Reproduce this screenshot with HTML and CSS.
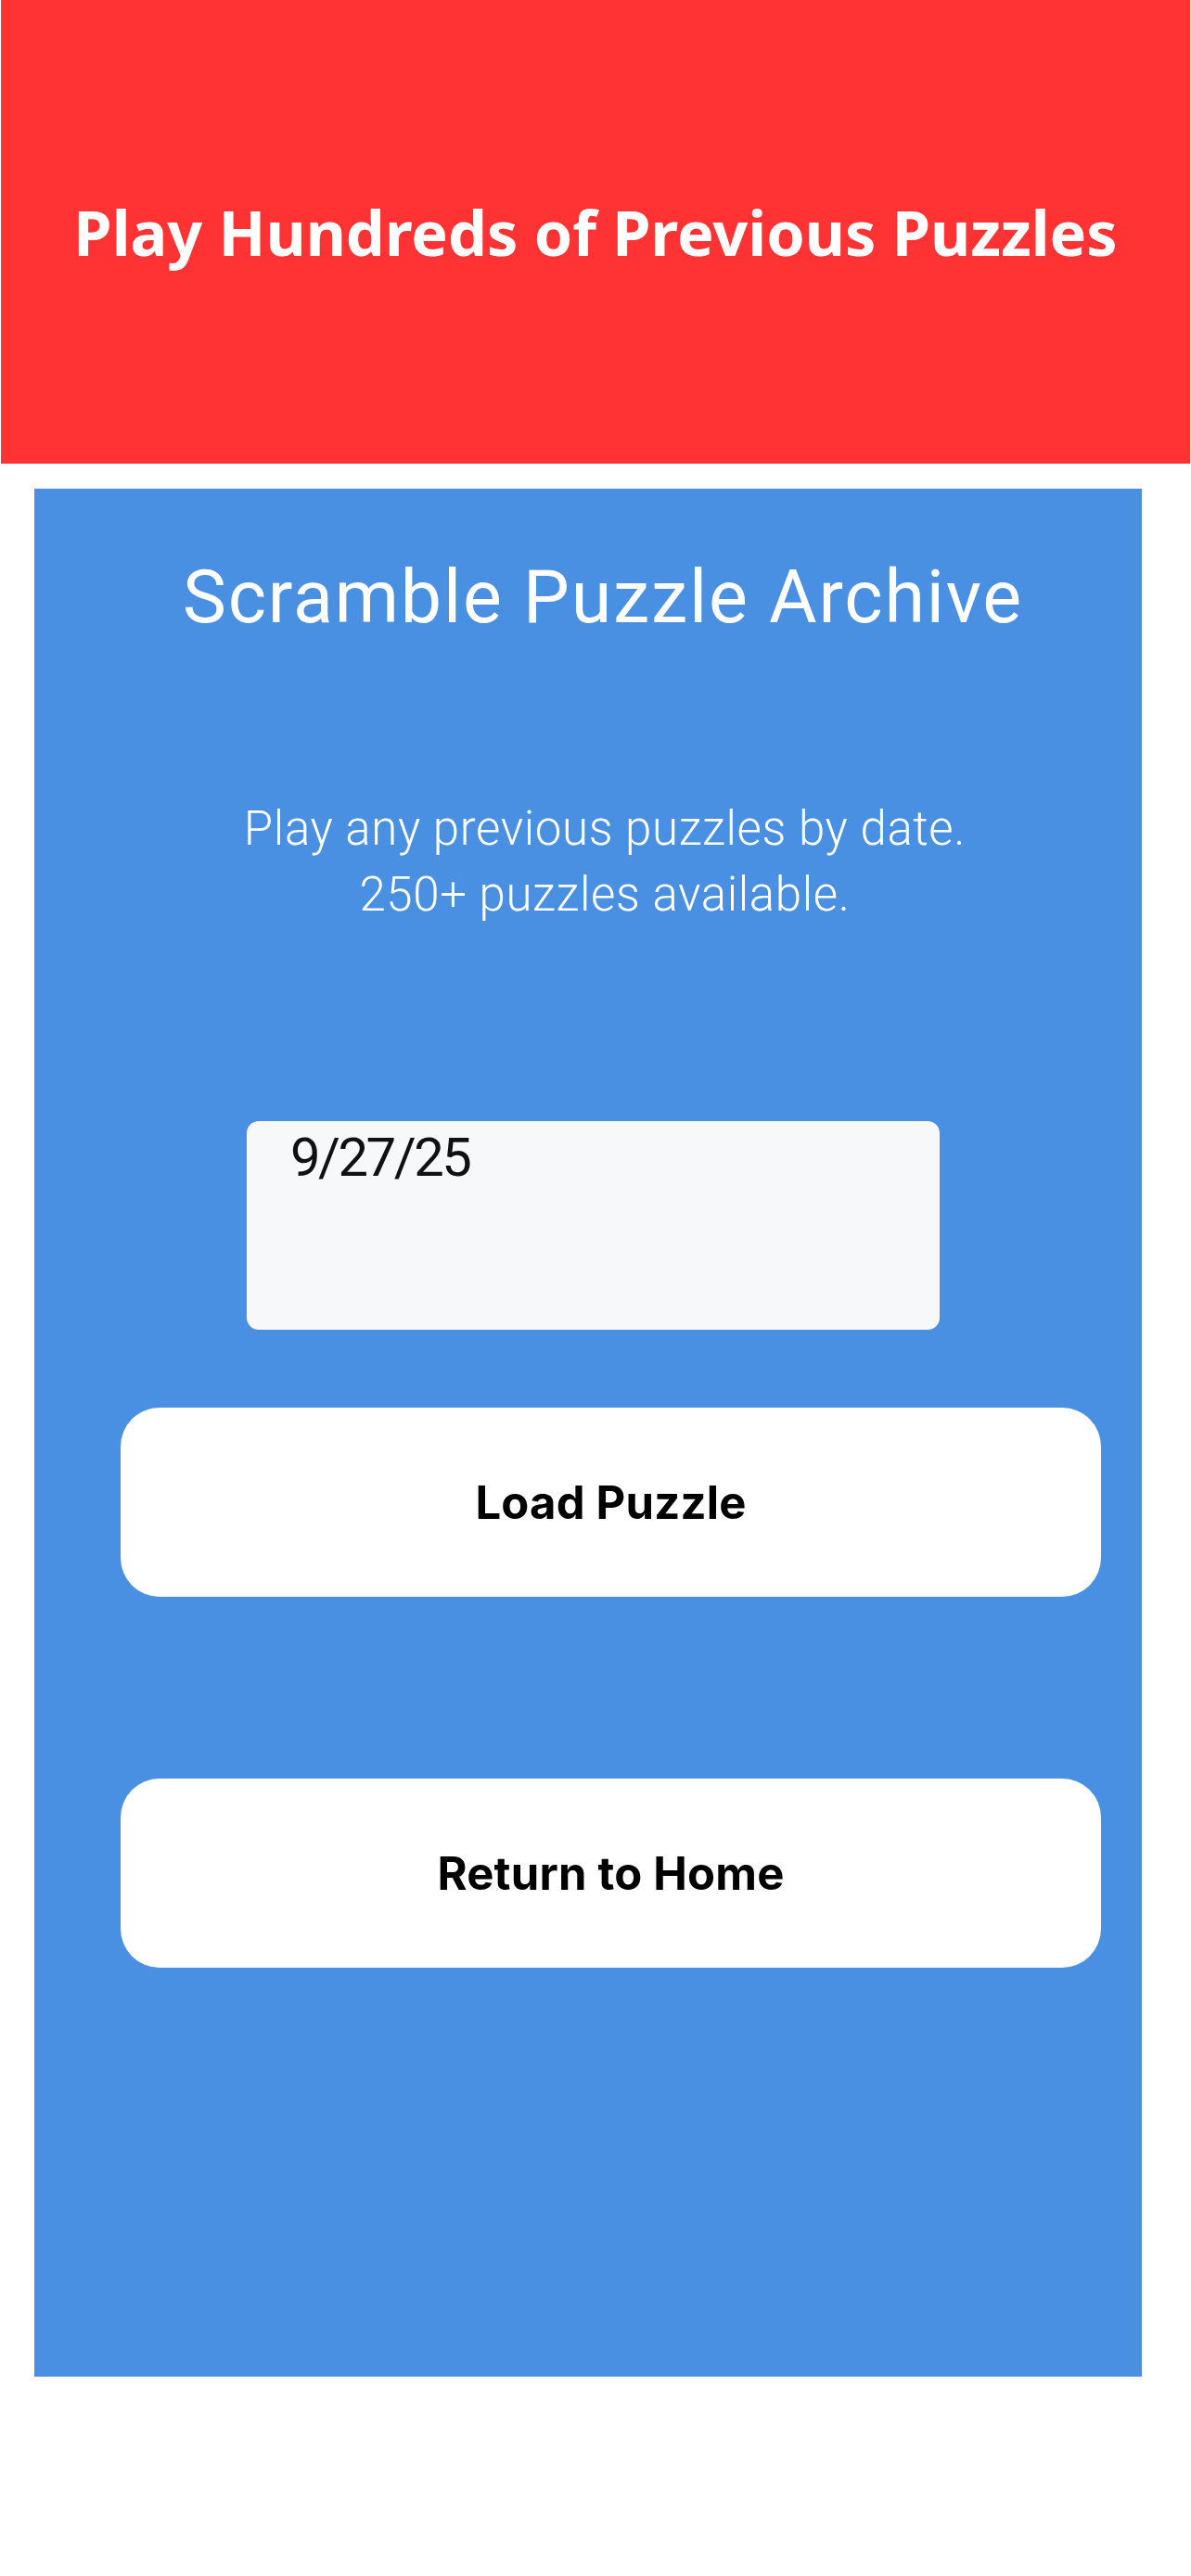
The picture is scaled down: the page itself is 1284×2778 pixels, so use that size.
FILE: index.html
```html
<!DOCTYPE html>
<html lang="en">
<head>
    <meta charset="UTF-8">
    <meta name="viewport" content="width=device-width, initial-scale=1.0">
    <title>Scramble Puzzle Archive</title>
    <link rel="stylesheet" href="styles.css">
</head>
<body>
    <header class="banner">
        <h2 class="banner-title">Play Hundreds of Previous Puzzles</h2>
    </header>

    <main class="archive-card">
        <h1 class="archive-title">Scramble Puzzle Archive</h1>

        <p class="archive-text">Play any previous puzzles by date.<br>250+ puzzles available.</p>

        <textarea class="date-field" id="puzzleDate">9/27/25</textarea>

        <button class="card-button load-button">Load Puzzle</button>
        <button class="card-button home-button">Return to Home</button>
    </main>
</body>
</html>
```

FILE: styles.css
```css
body {
    margin: 0;
    background-color: #ffffff;
    font-family: Roboto, "Liberation Sans", sans-serif;
}
.banner {
    height: 500px;
    margin: 0 1px;
    background-color: #ff3333;
    display: flex;
    justify-content: center;
    align-items: center;
}
.banner-title {
    margin: 0;
    color: #ffffff;
    font-family: "Noto Sans", "Open Sans", sans-serif;
    font-weight: 700;
    font-size: 66.5px;
    line-height: 1;
}
.archive-card {
    width: 1194px;
    height: 2036px;
    margin: 27px 0 0 37px;
    padding-top: 78px;
    box-sizing: border-box;
    background-color: #4a90e2;
    display: flex;
    flex-direction: column;
}
.archive-title {
    margin: 0;
    padding-left: 32px;
    color: #ffffff;
    text-align: center;
    font-weight: 400;
    font-size: 79px;
    line-height: 79px;
    letter-spacing: 1.8px;
}
.archive-text {
    margin: 174px 0 0;
    padding-left: 36px;
    color: #ffffff;
    text-align: center;
    font-weight: 300;
    font-size: 51px;
    line-height: 71px;
    letter-spacing: 0.6px;
}
.date-field {
    width: 747px;
    height: 225px;
    margin: 209px 0 0 229px;
    padding: 7px 47px;
    box-sizing: border-box;
    border: none;
    border-radius: 13px;
    background-color: #f7f8fa;
    color: #111111;
    font-family: Roboto, sans-serif;
    font-size: 58px;
    line-height: 64px;
    letter-spacing: -2.5px;
    resize: none;
    outline: none;
}
.card-button {
    width: 1057px;
    height: 204px;
    margin-left: 93px;
    border: none;
    border-radius: 42px;
    background-color: #ffffff;
    color: #000000;
    font-family: Inter, sans-serif;
    font-weight: 700;
    font-size: 49px;
    letter-spacing: 0.2px;
    cursor: pointer;
}
.load-button {
    margin-top: 84px;
}
.home-button {
    margin-top: 196px;
}
```
